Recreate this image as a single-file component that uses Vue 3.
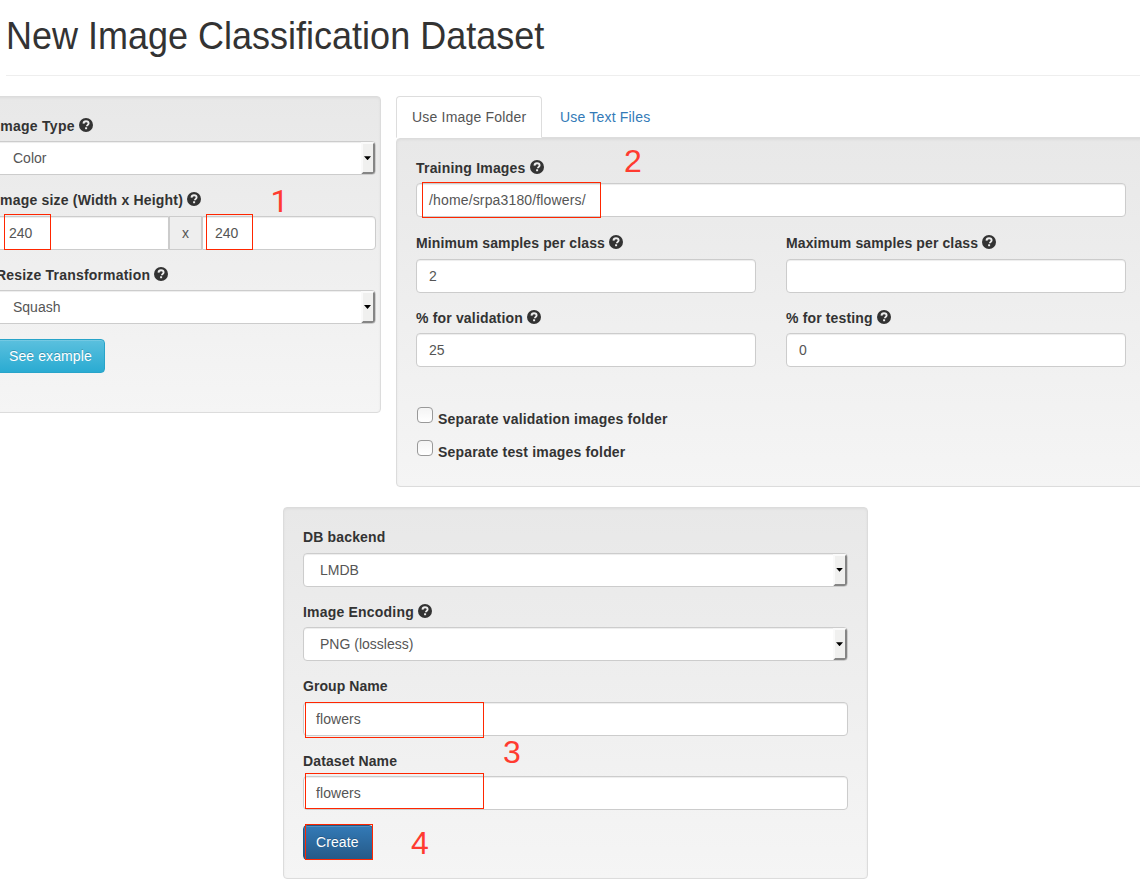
<script setup>
import { h } from 'vue'

const HelpIcon = () =>
  h('svg', { class: 'help', viewBox: '0 0 14 14', width: 14, height: 14 }, [
    h('circle', { cx: 7, cy: 7, r: 7, fill: '#333' }),
    h('path', {
      d: 'M4.5 5.600C4.600 3.800 5.500 3.200 7 3.200s2.600.8 2.600 2.100c0 1.600-1.700 1.500-1.700 3',
      fill: 'none',
      stroke: '#eee',
      'stroke-width': 1.9
    }),
    h('rect', { x: 6.100, y: 9.300, width: 2, height: 1.900, fill: '#eee' })
  ])

const marks = [
  { n: 'box-width' }, { n: 'box-height' }, { n: 'box-path' },
  { n: 'box-group' }, { n: 'box-name' }, { n: 'box-create' }
]
</script>

<template>
  <div class="page">
    <header><h1><span>New Image Classification Dataset</span></h1></header>

    <div class="top">
      <section class="well left">
        <div class="group">
          <label><span class="l1">Image Type</span><HelpIcon /></label>
          <div class="control select"><span>Color</span><i class="drop"></i></div>
        </div>
        <div class="group">
          <label><span class="l2">Image size (Width x Height)</span><HelpIcon /></label>
          <div class="input-group">
            <div class="control w1">240</div>
            <div class="addon">x</div>
            <div class="control w2">240</div>
          </div>
        </div>
        <div class="group">
          <label><span class="l3">Resize Transformation</span><HelpIcon /></label>
          <div class="control select"><span>Squash</span><i class="drop"></i></div>
        </div>
        <button class="btn info"><span>See example</span></button>
      </section>

      <div class="right">
        <nav class="tabs">
          <a class="tab active"><span>Use Image Folder</span></a>
          <a class="tab"><span>Use Text Files</span></a>
        </nav>
        <section class="well folder">
          <div class="group first">
            <label><span class="l4">Training Images</span><HelpIcon /></label>
            <div class="control"><span class="t-path">/home/srpa3180/flowers/</span></div>
          </div>
          <div class="cols">
            <div class="group limit">
              <label><span class="l5">Minimum samples per class</span><HelpIcon /></label>
              <div class="control">2</div>
            </div>
            <div class="group limit">
              <label><span class="l6">Maximum samples per class</span><HelpIcon /></label>
              <div class="control"></div>
            </div>
            <div class="group">
              <label><span class="l7">% for validation</span><HelpIcon /></label>
              <div class="control">25</div>
            </div>
            <div class="group">
              <label><span class="l8">% for testing</span><HelpIcon /></label>
              <div class="control">0</div>
            </div>
          </div>
          <div class="check"><i class="box"></i><span class="l9">Separate validation images folder</span></div>
          <div class="check"><i class="box"></i><span class="l10">Separate test images folder</span></div>
        </section>
      </div>
    </div>

    <section class="well bottom">
      <div class="group">
        <label><span class="l11">DB backend</span></label>
        <div class="control select"><span>LMDB</span><i class="drop"></i></div>
      </div>
      <div class="group">
        <label><span class="l12">Image Encoding</span><HelpIcon /></label>
        <div class="control select"><span>PNG (lossless)</span><i class="drop"></i></div>
      </div>
      <div class="group">
        <label><span class="l13">Group Name</span></label>
        <div class="control"><span class="t-flowers">flowers</span></div>
      </div>
      <div class="group">
        <label><span class="l14">Dataset Name</span></label>
        <div class="control"><span class="t-flowers">flowers</span></div>
      </div>
      <button class="btn primary"><span>Create</span></button>
    </section>

    <i v-for="m in marks" :key="m.n" class="mark" :class="m.n"></i>
    <b class="num n1">1</b>
    <b class="num n2">2</b>
    <b class="num n3">3</b>
    <b class="num n4">4</b>
  </div>
</template>

<style>
body { background: #fff; }
</style>

<style scoped>
* { box-sizing: border-box; }
.page {
  position: relative;
  width: 1140px;
  height: 883px;
  overflow: hidden;
  font: 14px/20px "Liberation Sans", Arial, sans-serif;
  color: #333;
}
header { margin-left: 6px; height: 76px; border-bottom: 1px solid #eee; }
h1 { margin: 0; padding-top: 16px; font-size: 36px; font-weight: 400; line-height: 40px; white-space: nowrap; }
h1 span { display: inline-block; transform: scaleY(1.06); }
.top { display: flex; align-items: flex-start; gap: 15px; margin: 20px 0 0 -24px; }
.well {
  border: 1px solid #dcdcdc;
  border-radius: 4px;
  background: linear-gradient(#e8e8e8, #f5f5f5);
  box-shadow: inset 0 1px 3px rgba(0, 0, 0, .05), 0 1px 0 rgba(255, 255, 255, .1);
  padding: 19px;
}
.left { width: 405px; height: 317px; padding-right: 4px; flex: none; }
.right { width: 750px; flex: none; }
.group { height: 74.4px; }
.group.first { height: 75px; }
label { display: flex; align-items: flex-start; gap: 4px; height: 25.3px; font-weight: 700; white-space: nowrap; }
.group.limit { height: 75px; }
.limit label { height: 26px; }
.help { display: block; flex: none; margin-top: 2px; }

/* Tracking per caption */
.l1 { letter-spacing: .28px; }
.l2, .l3, .l9 { letter-spacing: .19px; }
.l4, .l12 { letter-spacing: .2px; }
.l5, .l6, .l14 { letter-spacing: .12px; }
.l7, .l10 { letter-spacing: .17px; }
.l8, .l11, .t-path { letter-spacing: .15px; }
.l13 { letter-spacing: .06px; }
.t-flowers { letter-spacing: .08px; }
.tab span { letter-spacing: .19px; }

.control {
  position: relative;
  height: 34px;
  padding: 6px 12px;
  border: 1px solid #ccc;
  border-radius: 4px;
  background: #fff;
  color: #555;
  box-shadow: inset 0 1px 1px rgba(0, 0, 0, .075);
}
.select { padding-left: 16px; }
.drop {
  position: absolute;
  top: 0;
  right: 0;
  width: 14px;
  height: 32px;
  border: 2px solid;
  border-color: #fafafa #858585 #858585 #fafafa;
  border-radius: 0 3px 3px 0;
  background: #f0f0ef;
}
.drop::after {
  content: "";
  position: absolute;
  left: 1px;
  top: 12px;
  width: 7px;
  height: 4px;
  background: #000;
  clip-path: polygon(0 0, 100% 0, 50% 100%);
}
.input-group { display: flex; }
.w1 { width: 173px; border-radius: 4px 0 0 4px; }
.w2 { width: 174px; border-radius: 0 4px 4px 0; }
.addon { width: 33px; height: 34px; border: 1px solid #ccc; background: #eee; color: #555; text-align: center; line-height: 32px; }
.btn { display: block; height: 34px; padding: 0 12px; border: 1px solid; border-radius: 4px; font: inherit; color: #fff; text-align: left; text-shadow: 0 -1px 0 rgba(0, 0, 0, .2); box-shadow: inset 0 1px 0 rgba(255, 255, 255, .15); white-space: nowrap; }
.btn span { letter-spacing: .1px; }
.info { width: 109px; background: linear-gradient(#5bc0de, #2aabd2); border-color: #28a4c9; }
.primary { width: 70px; height: 35px; padding-bottom: 2px; background: linear-gradient(#337ab7, #265a88); border-color: #245580; }
.tabs { display: flex; gap: 2px; height: 42px; border-bottom: 1px solid #ddd; }
.tab { height: 42px; padding: 10px 15px; border: 1px solid transparent; border-radius: 4px 4px 0 0; color: #337ab7; white-space: nowrap; }
.active { width: 146px; background: #fff; border-color: #ddd; border-bottom-color: #fff; color: #555; }
.folder { height: 349px; }
.cols { display: grid; grid-template-columns: 340px 340px; column-gap: 30px; height: 173.6px; align-content: start; }
.check { display: flex; height: 33px; font-weight: 700; white-space: nowrap; }
.box { width: 16px; height: 16px; margin: 0 5px 0 1px; border: 1px solid #999; border-radius: 4px; background: linear-gradient(#f4f4f4, #fff); }
.check span { padding-top: 2px; }
.bottom { width: 585px; height: 372px; margin: 20px 0 0 283px; padding-top: 19.45px; }

/* Annotations laid over the form */
.mark { position: absolute; border: 1px solid #ff2600; }
.box-width { left: 4px; top: 214px; width: 47px; height: 36px; }
.box-height { left: 206px; top: 214px; width: 47px; height: 36px; }
.box-path { left: 422px; top: 182px; width: 179px; height: 36px; }
.box-group { left: 305px; top: 702px; width: 179px; height: 36px; }
.box-name { left: 305px; top: 773px; width: 179px; height: 36px; }
.box-create { left: 305px; top: 824px; width: 68px; height: 36px; }
.num { position: absolute; font-size: 32px; line-height: 36px; font-weight: 400; color: #ff3b30; }
.n1 { left: 270.5px; top: 183px; font-family: Roboto, sans-serif; }
.n2 { left: 624px; top: 143px; }
.n3 { left: 503px; top: 734px; }
.n4 { left: 411px; top: 825px; }
</style>
